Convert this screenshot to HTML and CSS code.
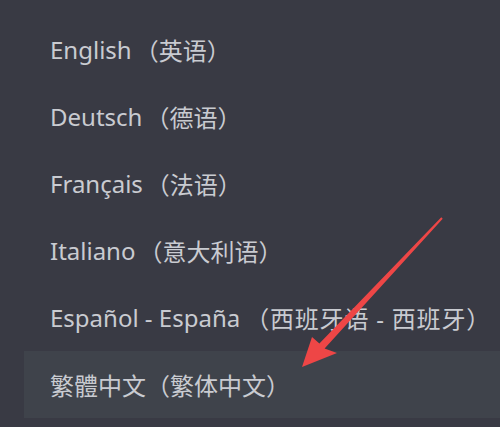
FILE: index.html
```html
<!DOCTYPE html>
<html>
<head>
<meta charset="utf-8">
<link rel="stylesheet" href="styles.css">
</head>
<body>
<div class="panel">
  <ul class="lang-list">
    <li class="lang">English<span class="native">（英语）</span></li>
    <li class="lang">Deutsch<span class="native">（德语）</span></li>
    <li class="lang">Français<span class="native">（法语）</span></li>
    <li class="lang">Italiano<span class="native">（意大利语）</span></li>
    <li class="lang">Español - España<span class="native wide">（西班牙语 - 西班牙）</span></li>
    <li class="lang active">繁體中文<span class="native">（繁体中文）</span></li>
  </ul>
  <svg class="arrow" width="500" height="427" viewBox="0 0 500 427">
    <polygon fill="#ee4646" points="441.3,217.3 442.7,218.7 324.6,348.4 337,353 302,367 312,337 319.4,343.6"/>
  </svg>
</div>
</body>
</html>
```
FILE: styles.css
```css
html, body {
  margin: 0;
  padding: 0;
  background: #393a44;
}
.panel {
  position: relative;
  width: 500px;
  height: 427px;
  overflow: hidden;
  background: #393a44;
}
.lang-list {
  list-style: none;
  margin: 0;
  padding: 16px 0 0 24px;
  display: flex;
  flex-direction: column;
}
.lang {
  height: 67px;
  display: flex;
  align-items: center;
  padding-left: 26px;
  font-family: "Noto Sans", "Noto Sans CJK SC", sans-serif;
  font-size: 24px;
  color: #c9cbd1;
  white-space: nowrap;
}
.native {
  margin-left: 3px;
}
.native.wide {
  margin-left: 5px;
  letter-spacing: 0.8px;
}
.lang.active .native {
  margin-left: 0;
}
.lang.active {
  background: #3f434b;
}
.arrow {
  position: absolute;
  left: 0;
  top: 0;
  pointer-events: none;
}
```
